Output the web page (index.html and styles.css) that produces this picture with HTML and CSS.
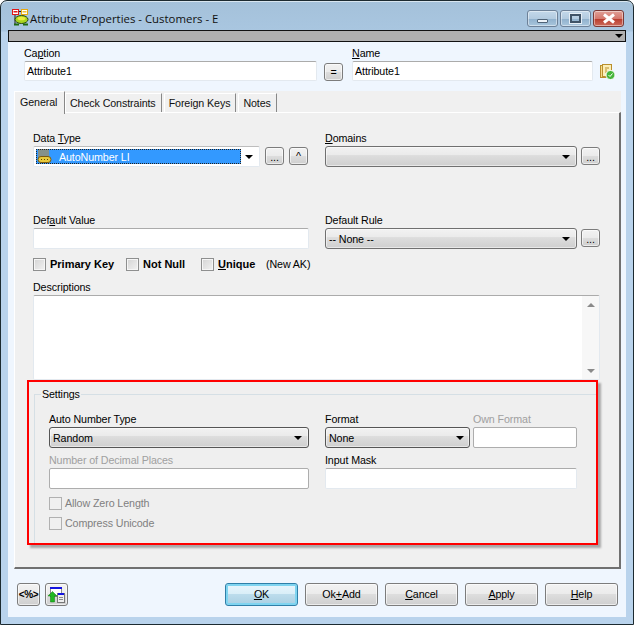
FILE: index.html
```
<!DOCTYPE html>
<html lang="en">
<head>
<meta charset="utf-8">
<title>Attribute Properties</title>
<link rel="stylesheet" href="styles.css">
</head>
<body>
<div class="window">
  <header class="titlebar">
    <svg class="app-icon" width="18" height="18" viewBox="0 0 18 18">
      <path d="M3 5v10M6 2.500h4" stroke="#222" fill="none"/>
      <rect x="0.500" y="0.500" width="6" height="5" fill="#fff" stroke="#e01818"/>
      <rect x="1.500" y="2" width="4" height="1.500" fill="#e01818"/>
      <rect x="9.500" y="0.500" width="6" height="5" fill="#fff" stroke="#e8a810"/>
      <rect x="10.500" y="2" width="4" height="1.500" fill="#f0c030"/>
      <ellipse cx="9.500" cy="10.500" rx="6.500" ry="4" fill="#a8d41f" stroke="#2c4a10"/>
      <ellipse cx="9.500" cy="9.500" rx="4" ry="1.800" fill="#ecec40"/>
      <path d="M2 15.500h5M11 15.500h5" stroke="#1f6a10" stroke-width="2"/>
    </svg>
    <span class="title">Attribute Properties - Customers - E</span>
    <div class="win-buttons">
      <div class="win-btn"><span class="glyph-min"></span></div>
      <div class="win-btn"><span class="glyph-max"></span></div>
      <div class="win-btn win-close">
        <svg width="16" height="11" viewBox="0 0 16 11"><path d="M3 1.500l10 8M13 1.500l-10 8" stroke="#fff" stroke-width="3" fill="none"/></svg>
      </div>
    </div>
  </header>
  <main class="client">
    <div class="toolbar"><span class="toolbar-arrow"></span></div>
    <div class="header-row">
      <div class="col-caption">
        <label class="lbl">Ca<u>p</u>tion</label>
        <div class="input input-h20">Attribute1</div>
      </div>
      <button class="btn btn-eq">=</button>
      <div class="col-name">
        <label class="lbl"><u>N</u>ame</label>
        <div class="input input-h20">Attribute1</div>
      </div>
      <svg class="name-icon" width="16" height="16" viewBox="0 0 16 16">
        <rect x="0.500" y="1.500" width="9" height="12" fill="#f7dc8c" stroke="#b98f2c"/>
        <rect x="2.500" y="0.500" width="9" height="12" fill="#fbeeb8" stroke="#b98f2c"/>
        <path d="M5 4h4M5 6h2M5 8h3" stroke="#b98f2c"/>
        <circle cx="10.500" cy="11" r="4.500" fill="#45b53a" stroke="#fff"/>
        <path d="M8.500 11l1.500 1.500 2.500-3" stroke="#fff" fill="none"/>
      </svg>
    </div>
    <nav class="tabs">
      <div class="tab tab-active">General</div>
      <div class="tab">Check Constraints</div>
      <div class="tab">Foreign Keys</div>
      <div class="tab">Notes</div>
    </nav>
    <section class="panel">
      <div class="form-row">
        <div class="col-left">
          <label class="lbl">Data <u>T</u>ype</label>
          <div class="dt-line">
            <div class="combo-white">
              <div class="selected">
                <svg class="dt-icon" width="15" height="15" viewBox="0 0 15 15">
                  <rect x="1" y="0" width="11" height="8" fill="#c98a2a" opacity=".55"/>
                  <rect x="1" y="7.500" width="13" height="6" rx="3" fill="#e8c93a" stroke="#7a5a10"/>
                  <path d="M4 10.500h1M7 10.500h1M10 10.500h1" stroke="#5a4208"/>
                </svg>
                <span class="sel-text">AutoNumber LI</span>
              </div>
              <span class="arrow"></span>
            </div>
            <button class="btn btn-small">...</button>
            <button class="btn btn-small btn-caret">^</button>
          </div>
        </div>
        <div class="col-right">
          <label class="lbl"><u>D</u>omains</label>
          <div class="dt-line">
            <div class="combo combo-wide"><span></span><span class="arrow"></span></div>
            <button class="btn btn-small">...</button>
          </div>
        </div>
      </div>
      <div class="form-row row-default">
        <div class="col-left">
          <label class="lbl">Def<u>a</u>ult Value</label>
          <div class="input input-left"></div>
        </div>
        <div class="col-right">
          <label class="lbl">Default Rule</label>
          <div class="dt-line">
            <div class="combo combo-wide"><span class="combo-text">-- None --</span><span class="arrow"></span></div>
            <button class="btn btn-small">...</button>
          </div>
        </div>
      </div>
      <div class="check-row">
        <span class="check"></span><b class="check-label cl-pk">Primary Key</b>
        <span class="check"></span><b class="check-label cl-nn">Not Null</b>
        <span class="check"></span><b class="check-label cl-un"><u>U</u>nique</b>
        <span class="new-ak">(New AK)</span>
      </div>
      <label class="lbl lbl-desc">Descriptions</label>
      <div class="textarea">
        <div class="scrollbar"><span class="sb-up"></span><span class="sb-down"></span></div>
      </div>
      <div class="red-box">
        <fieldset class="settings">
          <legend>Settings</legend>
          <div class="set-row">
            <div class="set-left">
              <label class="lbl">Auto Number Type</label>
              <div class="combo combo-dark"><span class="combo-text">Random</span><span class="arrow"></span></div>
            </div>
            <div class="set-format">
              <label class="lbl">Format</label>
              <div class="combo combo-dark"><span class="combo-text">None</span><span class="arrow"></span></div>
            </div>
            <div class="set-own">
              <label class="lbl lbl-off">Own Format</label>
              <div class="input input-off"></div>
            </div>
          </div>
          <div class="set-row">
            <div class="set-left">
              <label class="lbl lbl-off">Number of Decimal Places</label>
              <div class="input input-off"></div>
            </div>
            <div class="set-mask">
              <label class="lbl">Input Mask</label>
              <div class="input"></div>
            </div>
          </div>
          <div class="off-check first"><span class="check check-off"></span><span class="off-text">Allow Zero Length</span></div>
          <div class="off-check"><span class="check check-off"></span><span class="off-text">Compress Unicode</span></div>
        </fieldset>
      </div>
    </section>
    <footer class="footer">
      <button class="btn btn-icon code-btn">&lt;%&gt;</button>
      <button class="btn btn-icon">
        <svg width="17" height="16" viewBox="0 0 17 16">
          <rect x="2.500" y="0.500" width="11" height="9" fill="#fff" stroke="#8a8a8a"/>
          <rect x="2" y="0" width="12" height="2" fill="#1414e0"/>
          <rect x="9.500" y="6.500" width="7" height="9" fill="#eee" stroke="#777"/>
          <rect x="10" y="6" width="6" height="2" fill="#1414e0"/>
          <path d="M11 10.500h4M11 12.500h4" stroke="#888"/>
          <path d="M0 9l4.500-4.500L9 9H6.500v6h-4V9z" fill="#22b822" stroke="#0f7a0f" stroke-width=".5"/>
        </svg>
      </button>
      <div class="footer-actions">
        <button class="btn btn-action btn-default"><u>O</u>K</button>
        <button class="btn btn-action">Ok<u>+</u>Add</button>
        <button class="btn btn-action"><u>C</u>ancel</button>
        <button class="btn btn-action"><u>A</u>pply</button>
        <button class="btn btn-action"><u>H</u>elp</button>
      </div>
    </footer>
  </main>
</div>
</body>
</html>
```
FILE: styles.css
```
* { box-sizing: border-box; }
html, body { margin: 0; padding: 0; background: #fff; }
body { width: 634px; height: 625px; overflow: hidden; font: 10.7px/15px "Liberation Sans", Arial, sans-serif; letter-spacing: -0.1px; color: #000; }

.window {
  width: 634px; height: 625px;
  display: flex; flex-direction: column;
  border: 1px solid #1c2a30;
  border-radius: 7px 7px 0 0;
  background: linear-gradient(#a4c1da 0, #a9c6e0 30px, #b9d3ec 31px, #b9d3ec 100%);
  box-shadow: inset 0 1px 0 #d8e6f0;
}
.titlebar { height: 29px; display: flex; align-items: flex-start; padding: 7px 9px 0 11px; flex: none; }
.app-icon { flex: none; margin-top: 1px; }
.title { margin-top: 3px; font: 11.4px/15px "Open Sans", "Liberation Sans", sans-serif; letter-spacing: 0; color: #111; }
.win-buttons { margin-left: auto; display: flex; gap: 2px; margin-top: 2px; }
.win-btn {
  width: 31px; height: 17px; border: 1px solid #6d8198; border-radius: 3px;
  background: linear-gradient(#c3d8ea 0, #b3cbe0 50%, #8fb0cc 51%, #a9c6dd 100%);
  box-shadow: inset 0 0 0 1px rgba(255,255,255,.45);
  display: flex; align-items: center; justify-content: center;
}
.win-close { background: linear-gradient(#e0a097 0, #d5796e 50%, #b83a2b 51%, #cc6b5c 100%); border-color: #7b3a36; }
.glyph-min { width: 11px; height: 4px; margin-top: 4px; background: #eef3f8; border: 1px solid #4f6377; border-radius: 1px; }
.glyph-max { width: 11px; height: 9px; background: transparent; border: 2px solid #3f5367; box-shadow: 0 0 0 1px #e4edf5; }

.client {
  flex: none; width: 618px; height: 587px; margin-left: 7px;
  background: #eff6fe;
  display: flex; flex-direction: column;
}
.toolbar { height: 12px; background: #b0b0b0; border: 1px solid #111; flex: none; display: flex; justify-content: flex-end; align-items: center; padding-right: 2px; }
.toolbar-arrow { width: 0; height: 0; border: 4px solid transparent; border-top: 4px solid #000; border-bottom: 0; }

.lbl { display: block; height: 15px; line-height: 15px; white-space: nowrap; }
.lbl-off { color: #a0a0a0; }
.input {
  height: 21px; background: #fff;
  border: 1px solid #e3e9ef; border-top-color: #ababab; border-radius: 2px;
  padding: 0 2px; line-height: 19px; white-space: nowrap;
}
.input-h20 { height: 20px; line-height: 18px; }
.input-off { border-color: #adadad; }

.header-row { display: flex; align-items: flex-start; padding: 5px 0 0 16px; height: 49px; flex: none; }
.header-row .lbl { height: 14px; line-height: 12px; }
.col-caption { width: 293px; }
.btn-eq { width: 19px; height: 18px; margin: 16px 0 0 7px; color: #555; }
.col-name { width: 241px; margin-left: 9px; }
.name-icon { margin: 17px 0 0 7px; flex: none; }

.btn {
  font: 10.7px/15px "Liberation Sans", Arial, sans-serif; letter-spacing: -0.1px; color: #000;
  border: 1px solid #7c7c7c; border-radius: 3px; padding: 0;
  background: linear-gradient(#f2f2f2 0, #ebebeb 48%, #dddddd 50%, #cfcfcf 100%);
  box-shadow: inset 0 0 0 1px rgba(255,255,255,.6);
}
.btn-small { width: 19px; height: 18px; margin-top: 1px; line-height: 14px; padding-top: 2px; flex: none; }
.btn-caret { margin-left: 5px; line-height: 10px; padding-top: 0; }

.tabs { display: flex; height: 21px; padding-left: 6px; flex: none; width: 613px; background: #f0f0f0; background-clip: content-box; }
.tab {
  height: 20px; margin-top: 2px; padding: 0 5px 0 4px; line-height: 19px;
  border-top: 1px solid #fff; border-right: 1px solid #888; border-left: 1px solid #fff;
  white-space: nowrap; margin-right: 2px; overflow: hidden; color: #111;
}
.tab-active { margin-top: 0; height: 23px; width: 51px; background: #f0f0f0; position: relative; margin-right: 0; padding: 1px 0 0 5px; }

.panel {
  flex: none; width: 607px; height: 457px; margin-left: 6px;
  background: #f0f0f0;
  border-top: 1px solid #fff; border-left: 1px solid #fff;
  border-right: 2px solid #707070; border-bottom: 2px solid #707070;
  padding: 18px 0 0 18px;
}
.form-row { display: flex; }
.row-default { margin-top: 46px; }
.col-left { width: 292px; }
.dt-line { display: flex; }
.combo-white {
  width: 227px; height: 21px; background: #fff; border: 1px solid #e3e9ef; border-top-color: #bdbdbd; border-radius: 2px;
  display: flex; align-items: center; padding: 0 4px 0 2px; margin-right: 5px; flex: none;
}
.selected {
  width: 205px; height: 15px; background: #3399ff; color: #fff;
  outline: 1px dotted #222; outline-offset: -1px;
  display: flex; align-items: center;
}
.sel-text { padding-top: 2px; }
.dt-icon { margin-right: 7px; margin-left: 1px; flex: none; }
.arrow { width: 0; height: 0; border: 4px solid transparent; border-top: 4px solid #000; border-bottom: 0; margin-left: auto; margin-right: 2px; flex: none; }

.combo {
  height: 21px; border: 1px solid #707070; border-radius: 3px;
  background: linear-gradient(#f2f2f2 0, #ebebeb 40%, #dddddd 45%, #cfcfcf 100%);
  box-shadow: inset 0 0 0 1px rgba(255,255,255,.5);
  display: flex; align-items: center; padding: 0 4px 0 3px; white-space: nowrap;
}
.combo-wide { width: 252px; margin-right: 4px; flex: none; }
.combo-dark { border-color: #555; }
.combo-text { padding-top: 1px; }

.input-left { width: 276px; }
.check-row { display: flex; align-items: center; height: 15px; margin-top: 8px; }
.check { width: 13px; height: 13px; flex: none; border: 1px solid #8e8f8f; background: linear-gradient(135deg, #d4d4d4, #f2f2f2); box-shadow: inset 0 0 0 1px #f6f6f6; }
.check-label { margin-left: 4px; font-weight: bold; font-size: 11px; letter-spacing: 0; white-space: nowrap; }
.cl-pk { width: 76px; }
.cl-nn { width: 58px; }
.cl-un { width: 48px; }
.new-ak { white-space: nowrap; }
.lbl-desc { margin-top: 8px; }
.textarea {
  width: 567px; height: 85px; background: #fff;
  border: 1px solid #e3e9ef; border-top-color: #ababab; border-radius: 2px;
  display: flex; justify-content: flex-end;
}
.scrollbar { width: 17px; background: #f7f7f7; display: flex; flex-direction: column; justify-content: space-between; align-items: center; padding: 7px 0 6px; }
.sb-up { width: 0; height: 0; border: 4px solid transparent; border-bottom: 4px solid #8a8a8a; border-top: 0; }
.sb-down { width: 0; height: 0; border: 4px solid transparent; border-top: 4px solid #8a8a8a; border-bottom: 0; }

.red-box {
  width: 571px; height: 165px; margin: 0 0 0 -6px;
  border: 2px solid #f00; background: #efefef;
  box-shadow: 3px 3px 2px #a8a8a8;
  padding: 6px 0 0 5px;
}
.settings {
  margin: 0; height: 155px; padding: 11px 0 0 14px; min-width: 0;
  border: 0; border-top: 1px solid #d5dfe5; border-left: 1px solid #d5dfe5;
}
.settings legend { padding: 0 1px; margin-left: -8px; line-height: 13px; }
.set-row { display: flex; margin-bottom: 5px; }
.set-left { width: 260px; margin-right: 16px; flex: none; }
.set-format { width: 145px; margin-right: 3px; flex: none; }
.set-format .combo { padding-right: 3px; }
.set-own { width: 104px; flex: none; }
.set-mask { width: 252px; flex: none; }
.off-check { display: flex; align-items: center; height: 13px; margin-top: 7px; color: #808080; }
.off-check.first { margin-top: 8px; }
.check-off { border-color: #b1b1b1; background: #f0f0f0; box-shadow: none; }
.off-text { margin-left: 3px; white-space: nowrap; }

.footer { display: flex; padding: 14px 8px 0 9px; flex: none; }
.btn-icon { width: 23px; height: 23px; margin-right: 5px; display: flex; align-items: center; justify-content: center; }
.code-btn { font-weight: bold; font-size: 10px; letter-spacing: -0.3px; }
.footer-actions { margin-left: auto; display: flex; gap: 7px; }
.btn-action { width: 73px; height: 23px; }
.btn-default { border-color: #2f7fa8; background: linear-gradient(#eaf6fc 0, #d9eef8 48%, #bcdcec 50%, #a9cfe2 100%); box-shadow: inset 0 0 0 2px #7fd4f0; }
```
